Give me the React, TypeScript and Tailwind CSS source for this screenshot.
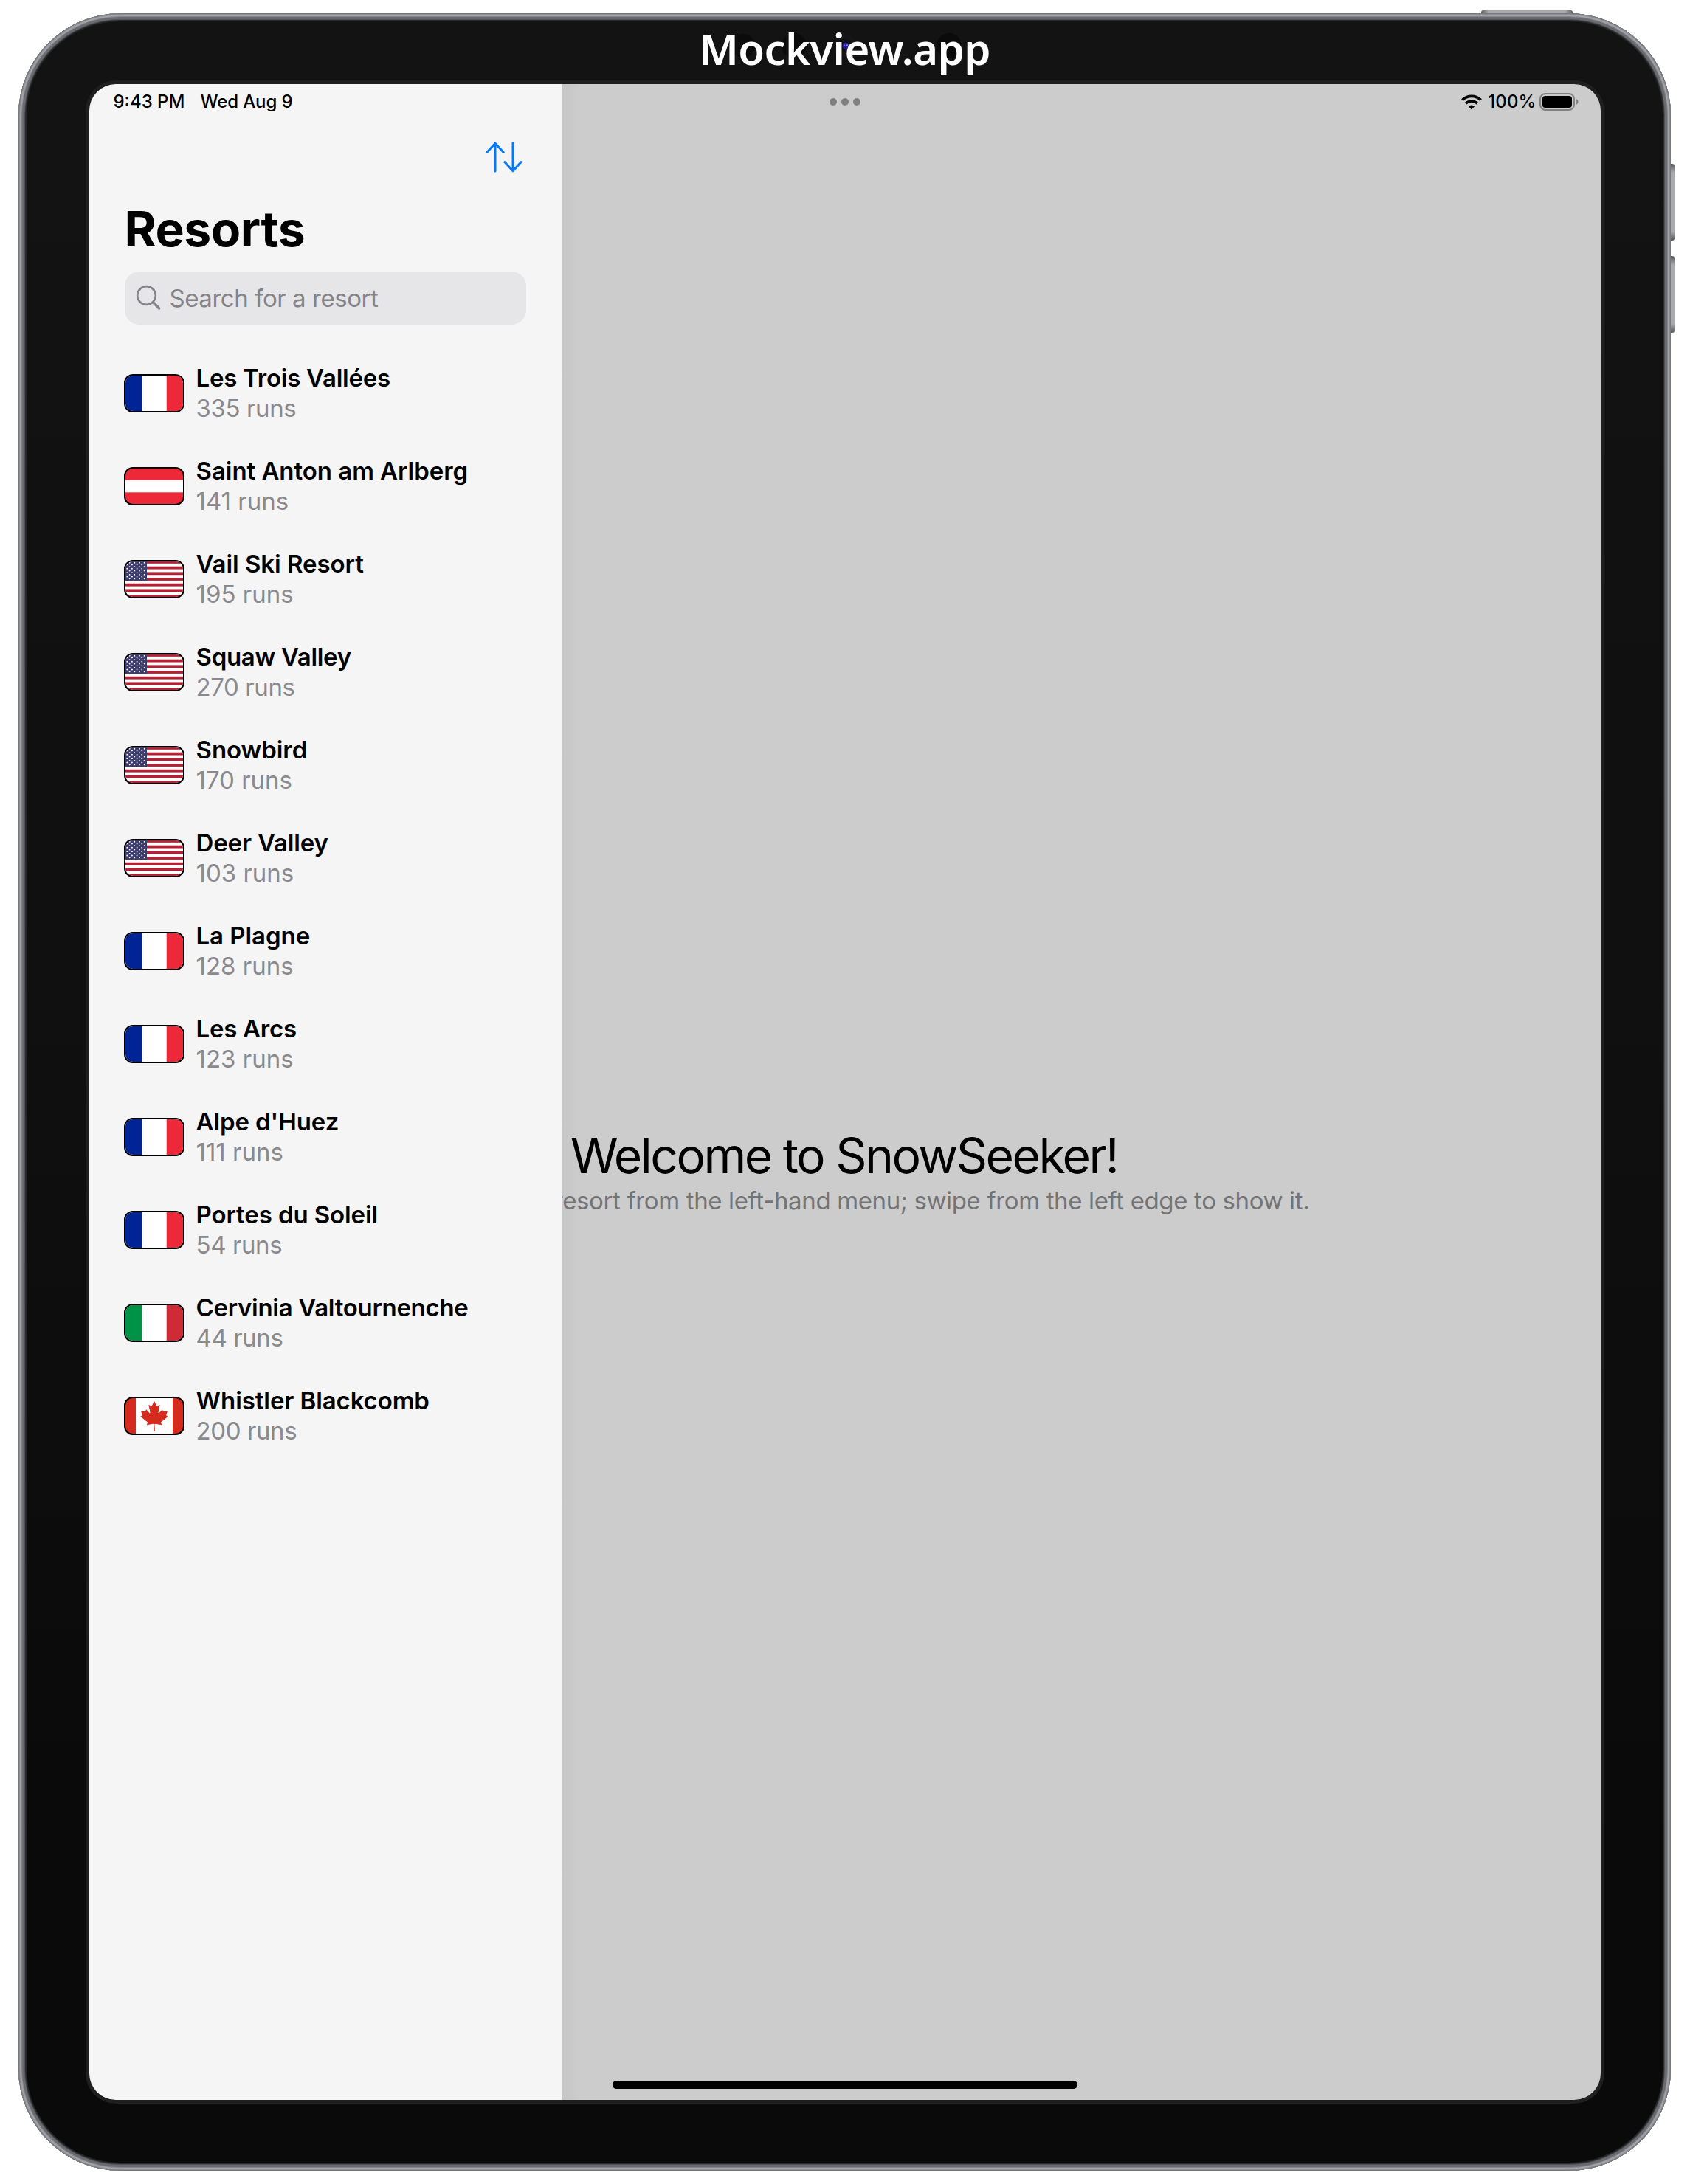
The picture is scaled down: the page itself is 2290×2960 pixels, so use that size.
import type { ReactNode } from "react";

type Country = "fr" | "at" | "us" | "it" | "ca";

interface Resort {
  name: string;
  runs: number;
  country: Country;
  tracking?: string;
}

const resorts: Resort[] = [
  { name: "Les Trois Vallées", runs: 335, country: "fr", tracking: "tracking-[-0.25px]" },
  { name: "Saint Anton am Arlberg", runs: 141, country: "at" },
  { name: "Vail Ski Resort", runs: 195, country: "us" },
  { name: "Squaw Valley", runs: 270, country: "us", tracking: "tracking-[-0.3px]" },
  { name: "Snowbird", runs: 170, country: "us" },
  { name: "Deer Valley", runs: 103, country: "us", tracking: "tracking-[-0.15px]" },
  { name: "La Plagne", runs: 128, country: "fr" },
  { name: "Les Arcs", runs: 123, country: "fr", tracking: "tracking-[-0.25px]" },
  { name: "Alpe d'Huez", runs: 111, country: "fr", tracking: "tracking-[-0.1px]" },
  { name: "Portes du Soleil", runs: 54, country: "fr", tracking: "tracking-[-0.1px]" },
  { name: "Cervinia Valtournenche", runs: 44, country: "it", tracking: "tracking-[-0.3px]" },
  { name: "Whistler Blackcomb", runs: 200, country: "ca", tracking: "tracking-[-0.1px]" },
];

function VerticalBands({ left, right }: { left: string; right: string }) {
  return (
    <>
      <rect width="100" height="50" fill="#ffffff" />
      <rect width="33.3" height="50" fill={left} />
      <rect x="66.7" width="33.3" height="50" fill={right} />
    </>
  );
}

function StarsAndStripes() {
  const stripe = 50 / 13;
  const stars: ReactNode[] = [];
  for (let row = 0; row < 9; row++) {
    const count = row % 2 === 0 ? 6 : 5;
    for (let col = 0; col < count; col++) {
      const cx = (row % 2 === 0 ? 3.3 : 6.6) + col * 6.67;
      stars.push(<circle key={`${row}-${col}`} cx={cx} cy={2.7 + row * 2.69} r="0.95" fill="#ffffff" />);
    }
  }
  return (
    <>
      <rect width="100" height="50" fill="#ffffff" />
      {[0, 2, 4, 6, 8, 10, 12].map((i) => (
        <rect key={i} y={i * stripe} width="100" height={stripe} fill="#b22234" />
      ))}
      <rect width="40" height={stripe * 7} fill="#3c3b6e" />
      {stars}
    </>
  );
}

function Flag({ country }: { country: Country }) {
  return (
    <div className="h-[52px] w-[82px] shrink-0 overflow-hidden rounded-[12px] border-2 border-black bg-black">
      <svg viewBox="0 0 100 50" preserveAspectRatio="xMidYMid slice" className="-m-px h-[50px] w-20 max-w-none">
        {country === "fr" && <VerticalBands left="#002395" right="#ed2939" />}
        {country === "it" && <VerticalBands left="#009246" right="#ce2b37" />}
        {country === "at" && (
          <>
            <rect width="100" height="50" fill="#ed2939" />
            <rect y="16.7" width="100" height="16.6" fill="#ffffff" />
          </>
        )}
        {country === "us" && <StarsAndStripes />}
        {country === "ca" && (
          <>
            <rect width="100" height="50" fill="#d52b1e" />
            <rect x="25" width="50" height="50" fill="#ffffff" />
            <g transform="translate(50 25) scale(0.0101)">
              <path
                fill="#d52b1e"
                d="m-90 2030 45-863a95 95 0 0 0-111-98l-859 151 116-320a65 65 0 0 0-20-73l-941-762 212-99a65 65 0 0 0 34-79l-186-572 542 115a65 65 0 0 0 73-38l105-247 423 454a65 65 0 0 0 111-57l-204-1052 327 189a65 65 0 0 0 91-27l332-652 332 652a65 65 0 0 0 91 27l327-189-204 1052a65 65 0 0 0 111 57l423-454 105 247a65 65 0 0 0 73 38l542-115-186 572a65 65 0 0 0 34 79l212 99-941 762a65 65 0 0 0-20 73l116 320-859-151a95 95 0 0 0-111 98l45 863z"
              />
            </g>
          </>
        )}
      </svg>
    </div>
  );
}

function SortIcon() {
  return (
    <svg width="50" height="42" viewBox="0 0 50 42" fill="none" stroke="#007aff" strokeWidth="3" strokeLinecap="round" strokeLinejoin="round">
      <path d="M13 40V2.6M1.8 14.4 13 2.2l11.2 12.2" />
      <path d="M37 2V39.4M25.8 27.6 37 39.8l11.2-12.2" />
    </svg>
  );
}

function SearchIcon() {
  return (
    <svg width="36" height="36" viewBox="0 0 36 36" fill="none" stroke="#838388" strokeLinecap="round">
      <circle cx="14.5" cy="14.5" r="12.3" strokeWidth="2.7" />
      <path d="M23.6 23.8 31.6 32" strokeWidth="3.6" />
    </svg>
  );
}

function WifiIcon() {
  return (
    <svg width="28" height="21" viewBox="0 0 28 21" fill="none" stroke="#000000" strokeWidth="3.7">
      <path d="M1.4 7.6a17.9 17.9 0 0 1 25.2 0" />
      <path d="M6 12.3a11.3 11.3 0 0 1 16 0" />
      <path d="M14 20.4 9.9 16.3a5.8 5.8 0 0 1 8.2 0z" fill="#000000" stroke="none" />
    </svg>
  );
}

function Battery() {
  return (
    <div className="flex items-center gap-[2px]">
      <div className="h-6 w-12 rounded-[8px] border-2 border-[#828282] p-[2px]">
        <div className="h-full w-full rounded-[4px] bg-black" />
      </div>
      <svg width="3" height="8" viewBox="0 0 3 8">
        <path d="M0 0a4.4 4.4 0 0 1 0 8z" fill="#828282" />
      </svg>
    </div>
  );
}

function Sidebar() {
  return (
    <aside className="flex w-[640px] shrink-0 flex-col bg-[#f5f5f5]">
      <div className="flex h-12 items-center gap-[21px] pl-[33px] text-[24px] leading-none font-medium">
        <span>9:43 PM</span>
        <span className="tracking-[-0.1px]">Wed Aug 9</span>
      </div>
      <div className="flex h-[102px] items-center justify-end pr-[53px]">
        <SortIcon />
      </div>
      <h1 className="flex h-[92px] items-center pl-12 text-[66px] leading-none font-bold tracking-[-0.5px]">Resorts</h1>
      <div className="mt-3 mr-12 ml-12 flex h-[72px] items-center gap-[10px] rounded-[20px] bg-[#e6e6e8] pl-[15px] text-[33px] leading-none tracking-[-0.45px] text-[#838388]">
        <SearchIcon />
        <span>Search for a resort</span>
      </div>
      <ul className="mt-[30px] pl-[47px]">
        {resorts.map((r) => (
          <li key={r.name} className="flex h-[126px] items-center gap-4 text-[33px] leading-[41px]">
            <Flag country={r.country} />
            <div className="whitespace-nowrap">
              <div className={`font-semibold ${r.tracking ?? "tracking-[-0.05px]"}`}>{r.name}</div>
              <div className={`text-[#8a8a8e] ${String(r.runs).startsWith("1") ? "tracking-[0px]" : "tracking-[-0.4px]"}`}>
                {r.runs} runs
              </div>
            </div>
          </li>
        ))}
      </ul>
    </aside>
  );
}

function Detail() {
  return (
    <main className="flex min-w-0 flex-1 flex-col overflow-hidden bg-[linear-gradient(to_right,#c6c6c6,#cccccc_24px)]">
      <div className="flex h-12 shrink-0 items-center pr-[30px] pl-[363px]">
        <div className="flex gap-[6px]">
          <span className="size-[10px] rounded-full bg-[#808080]" />
          <span className="size-[10px] rounded-full bg-[#808080]" />
          <span className="size-[10px] rounded-full bg-[#808080]" />
        </div>
        <div className="ml-auto flex items-center">
          <WifiIcon />
          <span className="mr-[4px] ml-[8px] text-[24px] leading-none font-medium tracking-[0.1px]">100%</span>
          <Battery />
        </div>
      </div>
      <div className="ml-[-641px] w-[2048px] pt-[1364px] text-center whitespace-nowrap">
        <h2 className="text-[66px] leading-[80px] tracking-[-2.54px]">Welcome to SnowSeeker!</h2>
        <p className="text-[33px] leading-[42px] tracking-[-0.36px] text-[#747476]">
          Please select a resort from the left-hand menu; swipe from the left edge to show it.
        </p>
      </div>
      <div className="mt-auto mb-[15px] ml-[69px] h-[11px] w-[630px] shrink-0 rounded-full bg-black" />
    </main>
  );
}

function CameraArray() {
  return (
    <svg className="absolute top-[10px] left-[955px]" width="330" height="50" viewBox="0 0 330 50">
      <circle cx="16" cy="23" r="16" fill="#0b0b0b" />
      <circle cx="85" cy="23" r="17" fill="#0b0b0b" />
      <circle cx="155" cy="23" r="15" fill="#151518" />
      <circle cx="155" cy="23" r="9" fill="#101014" />
      <circle cx="155" cy="23" r="4.5" fill="#1c1c9a" />
      <circle cx="153" cy="22.5" r="1.2" fill="#a04cf0" />
      <circle cx="157" cy="22.5" r="1.2" fill="#6f8cff" />
      <circle cx="223" cy="23" r="3" fill="#0a0a0a" />
      <circle cx="295" cy="23" r="17" fill="#0b0b0b" />
    </svg>
  );
}

export default function App() {
  return (
    <div className="relative h-[2960px] w-[2290px] overflow-hidden bg-white pt-[18px] pl-[25px] font-['Inter',sans-serif] text-black">
      <div className="absolute top-[14px] left-[2007px] h-[6px] w-[124px] rounded-t-[3px] bg-[linear-gradient(to_right,#5c5d61,#a9aab0_10px,#a9aab0_114px,#5c5d61)]" />
      <div className="absolute top-[222px] left-[2262px] h-[104px] w-[7px] rounded-r-[3px] bg-[linear-gradient(to_bottom,#55565a,#a9aab0_12px,#a9aab0_92px,#55565a)]" />
      <div className="absolute top-[347px] left-[2262px] h-[104px] w-[7px] rounded-r-[3px] bg-[linear-gradient(to_bottom,#55565a,#a9aab0_12px,#a9aab0_92px,#55565a)]" />

      <div className="relative h-[2924px] w-[2239px] rounded-[138px] bg-[#2b2c2d] p-[10px] shadow-[inset_0_0_0_1px_#77787c,inset_0_0_0_2px_#8c8d92,inset_0_0_0_4px_#a2a3a9,inset_0_0_0_5px_#85868b,inset_0_0_0_8px_#6a6b70,inset_0_0_0_9px_#505155]">
        <div className="relative flex h-full flex-col rounded-[128px] border border-[#242425] bg-[linear-gradient(to_bottom,#131313,#0f0f0f_50%,#0a0a0a_85%)] px-[80px]">
          <CameraArray />
          <div className="relative flex h-[80px] shrink-0 items-start justify-center font-['Noto_Sans',sans-serif] text-[58px] leading-[80px] font-semibold tracking-[-0.6px] text-white">
            <span className="-mt-[3px]">Mockview.app</span>
          </div>
          <div className="flex h-[2742px] w-[2058px] shrink-0 self-center rounded-[41px] bg-[#1f1f1f] p-[5px]">
            <div className="flex w-full overflow-hidden rounded-[36px]">
              <Sidebar />
              <Detail />
            </div>
          </div>
        </div>
      </div>
    </div>
  );
}
